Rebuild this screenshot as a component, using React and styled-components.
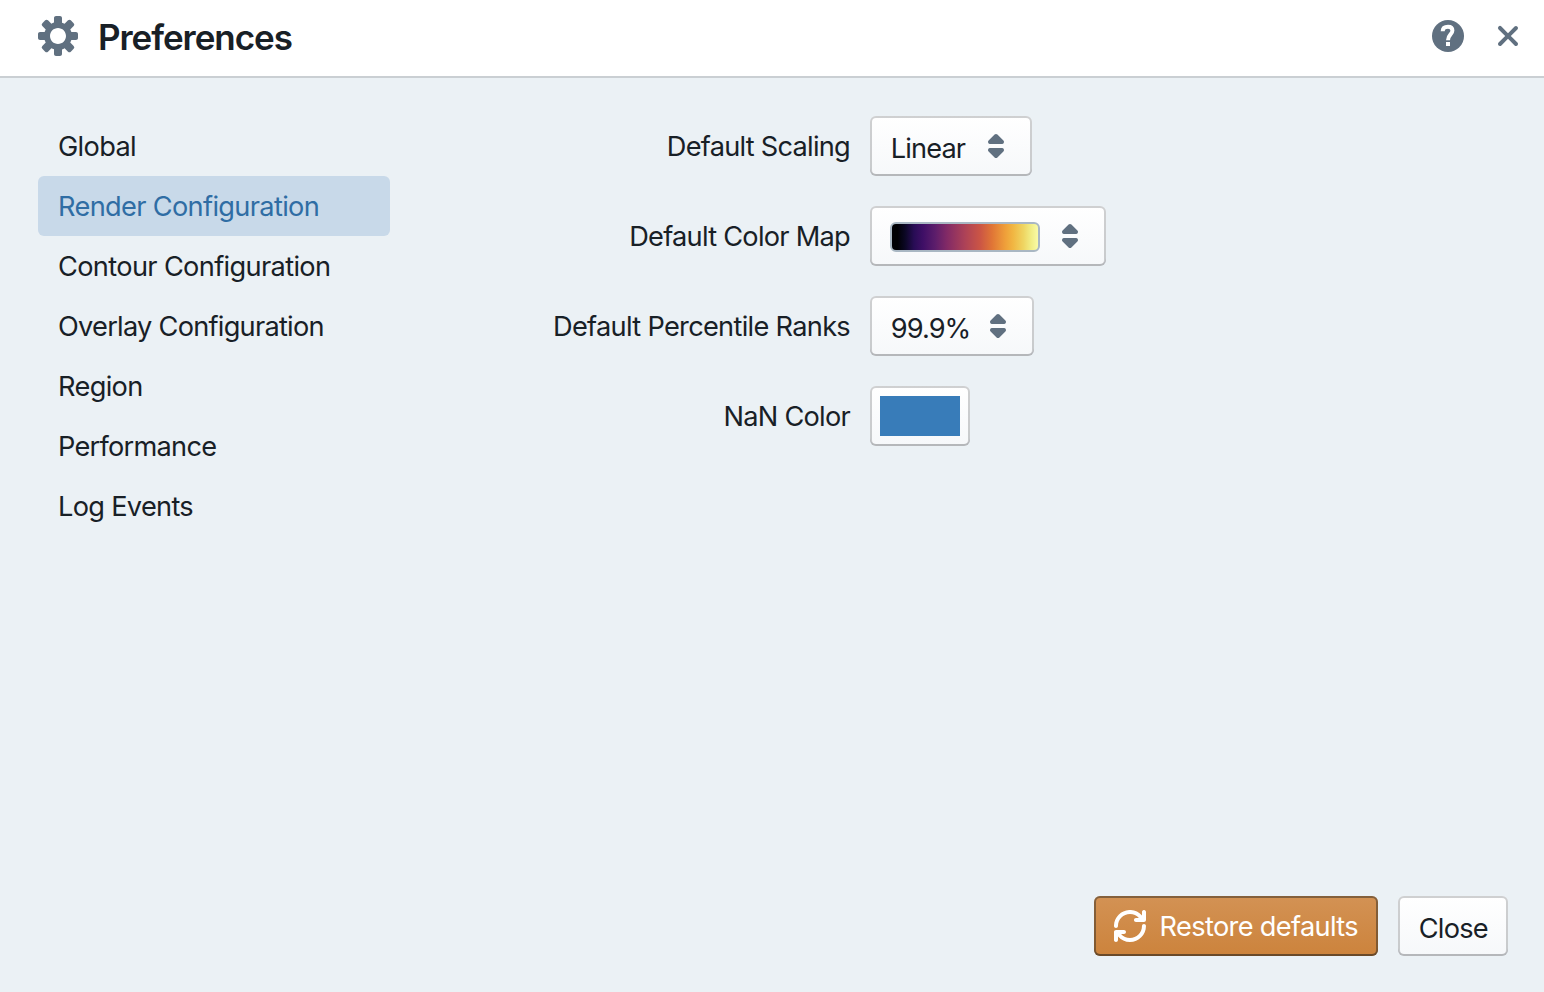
import React from "react";
import styled, { createGlobalStyle } from "styled-components";

const GlobalStyle = createGlobalStyle`
  *, *::before, *::after { box-sizing: border-box; }
  body { margin: 0; background: #ebf1f5; }
`;

const Dialog = styled.div`
  display: flex;
  flex-direction: column;
  width: 1544px;
  height: 992px;
  overflow: hidden;
  background: #ebf1f5;
  color: #182026;
  font-family: Inter, "Liberation Sans", sans-serif;
  font-size: 27.2px;
  font-weight: 420;
  line-height: 36px;
`;

const Header = styled.header`
  display: flex;
  align-items: center;
  height: 78px;
  padding: 0 16px 4px 38px;
  background: #fff;
  border-bottom: 2px solid #cacfd3;
`;

const Title = styled.h4`
  flex: 1;
  margin: 2px 0 0 20px;
  font-size: 35px;
  font-weight: 600;
  line-height: 44px;
  letter-spacing: -1.05px;
`;

const HeaderActions = styled.div`
  display: flex;
  align-items: center;
  gap: 24px;
`;

const IconButton = styled.button`
  display: flex;
  padding: 0;
  border: 0;
  background: none;
`;

const Svg = styled.svg`
  display: block;
  flex: none;
  fill: ${(p) => p.$color || "#607080"};
`;

const Body = styled.div`
  display: flex;
  flex: 1;
  padding: 38px;
`;

const TabList = styled.nav`
  display: flex;
  flex-direction: column;
  width: 352px;
`;

const Tab = styled.div`
  height: 60px;
  padding: 1px 20px 0;
  border-radius: 6px;
  line-height: 60px;
  white-space: nowrap;
  letter-spacing: ${(p) => p.$tracking}px;
  color: ${(p) => (p.$active ? "#2f6da4" : "inherit")};
  background: ${(p) => (p.$active ? "#c8d9e9" : "transparent")};
`;

const Form = styled.div`
  display: flex;
  flex: 1;
  flex-direction: column;
  gap: 30px;
`;

const Field = styled.div`
  display: flex;
  height: 60px;
`;

const Label = styled.label`
  width: 460px;
  margin-right: 20px;
  padding-top: 1px;
  line-height: 60px;
  text-align: right;
  white-space: nowrap;
  letter-spacing: ${(p) => p.$tracking}px;
`;

const Button = styled.button`
  display: flex;
  align-items: center;
  justify-content: space-between;
  width: ${(p) => p.$width}px;
  height: 60px;
  padding: 0 20px;
  border: 0;
  border-radius: 6px;
  font: inherit;
  white-space: nowrap;
  letter-spacing: ${(p) => p.$tracking || 0}px;
  color: ${(p) => (p.$warning ? "#fff" : "#182026")};
  background: ${(p) =>
    p.$warning
      ? "linear-gradient(to bottom, #d39254, #cc833c)"
      : "linear-gradient(to bottom, #fff, #f6f8fa)"};
  box-shadow: ${(p) =>
    p.$warning
      ? "inset 0 0 0 2px rgba(16, 22, 26, 0.4), inset 0 -2px 0 rgba(16, 22, 26, 0.2)"
      : "inset 0 0 0 2px rgba(16, 22, 26, 0.2), inset 0 -2px 0 rgba(16, 22, 26, 0.1)"};
`;

const ButtonText = styled.span`
  padding-top: ${(p) => p.$drop}px;
  padding-left: 0.7px;
`;

const ColorMap = styled.span`
  width: 150px;
  height: 30px;
  margin-top: 2px;
  border: 2px solid #a9b7c3;
  border-radius: 6px;
  background: linear-gradient(
    to right,
    #000004 0%, #000004 5%, #0b0724 10%, #280c55 16%, #3f0f66 22%, #5c1d6b 30%,
    #822a66 38%, #ad4257 50%, #cb5545 60%, #e07536 68%, #efa03a 77%,
    #f1b642 82%, #efd562 89%, #f1ed85 94%, #fcffb0 100%
  );
  background-origin: border-box;
`;

const Swatch = styled.span`
  width: 80px;
  height: 40px;
  background: #387cb9;
`;

const SwatchButton = styled(Button)`
  padding: 0 10px;
`;

const Footer = styled.footer`
  display: flex;
  justify-content: flex-end;
  gap: 20px;
  padding: 0 36px 36px;
`;

const CogIcon = () => (
  <Svg width="40" height="40" viewBox="0 0 20 20">
    <path
      fillRule="evenodd"
      d="M19 8h-2.31c-.14-.46-.33-.89-.56-1.3l1.7-1.7a.996.996 0 000-1.41l-1.42-1.42a.996.996 0 00-1.41 0l-1.7 1.7c-.41-.22-.84-.41-1.3-.55V1c0-.55-.45-1-1-1H9c-.55 0-1 .45-1 1v2.31c-.46.14-.89.33-1.3.56L5 2.17a.996.996 0 00-1.41 0L2.17 3.59a.996.996 0 000 1.41l1.7 1.7c-.22.41-.41.84-.55 1.3H1c-.55 0-1 .45-1 1v2c0 .55.45 1 1 1h2.31c.14.46.33.89.56 1.3L2.17 15a.996.996 0 000 1.41l1.42 1.42a.996.996 0 001.41 0l1.7-1.7c.41.22.84.41 1.3.55V19c0 .55.45 1 1 1h2c.55 0 1-.45 1-1v-2.31c.46-.14.89-.33 1.3-.56l1.7 1.7a.996.996 0 001.41 0l1.42-1.42a.996.996 0 000-1.41l-1.7-1.7c.22-.41.41-.84.55-1.3H19c.55 0 1-.45 1-1V9c0-.55-.45-1-1-1zm-9 6c-2.21 0-4-1.79-4-4s1.79-4 4-4 4 1.79 4 4-1.79 4-4 4z"
    />
  </Svg>
);

const HelpIcon = () => (
  <Svg width="32" height="32" viewBox="0 0 16 16">
    <circle cx="8" cy="8" r="8" />
    <path
      fill="none"
      stroke="#fff"
      strokeWidth="2"
      d="M5.35 5.6C5.4 4.2 6.4 3.4 8 3.4C9.5 3.4 10.2 4.2 10.2 5.2C10.2 7.2 8 7.2 8 10.1"
    />
    <path fill="#fff" d="M7 11h2v2H7z" />
  </Svg>
);

const CrossIcon = () => (
  <Svg width="40" height="40" viewBox="0 0 20 20">
    <path d="M11.41 10l3.29-3.29c.19-.18.3-.43.3-.71a1.003 1.003 0 00-1.71-.71L10 8.59l-3.29-3.3a1.003 1.003 0 00-1.42 1.42L8.59 10 5.3 13.29c-.19.18-.3.43-.3.71a1.003 1.003 0 001.71.71l3.29-3.3 3.29 3.29c.18.19.43.3.71.3a1.003 1.003 0 00.71-1.71L11.41 10z" />
  </Svg>
);

const CaretIcon = () => (
  <Svg width="32" height="32" viewBox="0 0 16 16">
    <path d="M5 7h6a1.003 1.003 0 00.71-1.71l-3-3C8.53 2.11 8.28 2 8 2s-.53.11-.71.29l-3 3A1.003 1.003 0 005 7zm6 2H5a1.003 1.003 0 00-.71 1.71l3 3c.18.18.43.29.71.29s.53-.11.71-.29l3-3A1.003 1.003 0 0011 9z" />
  </Svg>
);

const RefreshIcon = () => (
  <Svg width="32" height="32" viewBox="0 0 16 16" $color="#fff">
    <path d="M14.99 6.99c-.55 0-1 .45-1 1 0 3.31-2.69 6-6 6-1.77 0-3.36-.78-4.46-2h1.46c.55 0 1-.45 1-1s-.45-1-1-1h-4c-.55 0-1 .45-1 1v4c0 .55.45 1 1 1s1-.45 1-1v-1.74a7.95 7.95 0 006 2.74c4.42 0 8-3.58 8-8 0-.55-.45-1-1-1zm0-7c-.55 0-1 .45-1 1v1.74a7.95 7.95 0 00-6-2.74c-4.42 0-8 3.58-8 8 0 .55.45 1 1 1s1-.45 1-1c0-3.31 2.69-6 6-6 1.77 0 3.36.78 4.46 2h-1.46c-.55 0-1 .45-1 1s.45 1 1 1h4c.55 0 1-.45 1-1v-4c0-.55-.45-1-1-1z" />
  </Svg>
);

const TABS = [
  { name: "Global", tracking: -0.67 },
  { name: "Render Configuration", tracking: -0.66, active: true },
  { name: "Contour Configuration", tracking: -0.65 },
  { name: "Overlay Configuration", tracking: -0.74 },
  { name: "Region", tracking: -0.65 },
  { name: "Performance", tracking: -0.74 },
  { name: "Log Events", tracking: -0.7 },
];

export default function App() {
  return (
    <>
      <GlobalStyle />
      <Dialog>
        <Header>
          <CogIcon />
          <Title>Preferences</Title>
          <HeaderActions>
            <IconButton>
              <HelpIcon />
            </IconButton>
            <IconButton>
              <CrossIcon />
            </IconButton>
          </HeaderActions>
        </Header>
        <Body>
          <TabList>
            {TABS.map((t) => (
              <Tab key={t.name} $active={t.active} $tracking={t.tracking}>
                {t.name}
              </Tab>
            ))}
          </TabList>
          <Form>
            <Field>
              <Label $tracking={-0.75}>Default Scaling</Label>
              <Button $width={162} $tracking={-0.85}>
                <ButtonText $drop={5}>Linear</ButtonText>
                <CaretIcon />
              </Button>
            </Field>
            <Field>
              <Label $tracking={-0.74}>Default Color Map</Label>
              <Button $width={236}>
                <ColorMap />
                <CaretIcon />
              </Button>
            </Field>
            <Field>
              <Label $tracking={-0.7}>Default Percentile Ranks</Label>
              <Button $width={164} $tracking={-0.9}>
                <ButtonText $drop={5}>99.9%</ButtonText>
                <CaretIcon />
              </Button>
            </Field>
            <Field>
              <Label $tracking={-0.75}>NaN Color</Label>
              <SwatchButton $width={100}>
                <Swatch />
              </SwatchButton>
            </Field>
          </Form>
        </Body>
        <Footer>
          <Button $width={284} $tracking={-0.66} $warning>
            <RefreshIcon />
            <ButtonText $drop={1}>Restore defaults</ButtonText>
          </Button>
          <Button $width={110} $tracking={-0.75}>
            <ButtonText $drop={5}>Close</ButtonText>
          </Button>
        </Footer>
      </Dialog>
    </>
  );
}
